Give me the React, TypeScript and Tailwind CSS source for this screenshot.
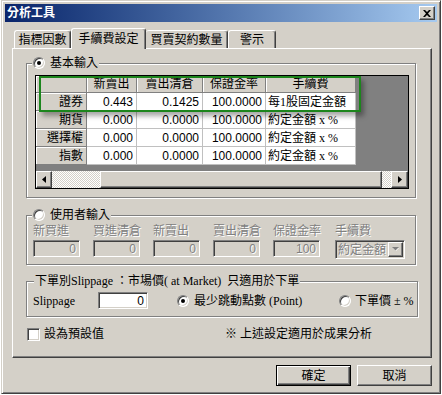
const rows = [
  ['證券', '0.443', '0.1425', '100.0000', '每1股固定金額'],
  ['期貨', '0.000', '0.0000', '100.0000', '約定金額 x %'],
  ['選擇權', '0.000', '0.0000', '100.0000', '約定金額 x %'],
  ['指數', '0.000', '0.0000', '100.0000', '約定金額 x %'],
];
const headers = ['', '新賣出', '賣出清倉', '保證金率', '手續費'];
const colW = ['w-[51px]', 'w-[50px]', 'w-[66px]', 'w-[63px]', 'w-[90px]'];

function Radio({ checked }: { checked?: boolean }) {
  return (
    <span className="flex items-center justify-center w-[12px] h-[12px] shrink-0 rounded-full bg-white border border-t-[#808080] border-l-[#808080] border-r-white border-b-white shadow-[inset_1px_1px_0_#404040,inset_-1px_-1px_0_#d4d0c8]">
      {checked && <span className="w-[4px] h-[4px] rounded-full bg-black" />}
    </span>
  );
}

function Arrow({ dir }: { dir: 'left' | 'right' }) {
  return (
    <svg width="4" height="7" viewBox="0 0 4 7">
      {dir === 'left' ? <path d="M4 0 L0 3.5 L4 7 Z" fill="#000" /> : <path d="M0 0 L4 3.5 L0 7 Z" fill="#000" />}
    </svg>
  );
}

function DisabledField({ label }: { label: string }) {
  return (
    <div className="flex flex-col w-[47px]">
      <span className="h-[14px] whitespace-nowrap text-[#808080] [text-shadow:1px_1px_0_#fff]">{label}</span>
      <div className="mt-[2px] h-[17px] flex items-center justify-end pr-[3px] border border-t-[#808080] border-l-[#808080] border-r-white border-b-white shadow-[inset_1px_1px_0_#404040,inset_-1px_-1px_0_#d4d0c8] font-['Liberation_Sans',sans-serif] text-[#808080] [text-shadow:1px_1px_0_#fff]">
        {label === '保證金率' ? '100' : '0'}
      </div>
    </div>
  );
}

export default function App() {
  return (
    <div className="w-[442px] h-[395px] bg-white overflow-hidden">
      <div className="ml-[1px] w-[440px] h-[394px] bg-[#d4d0c8] border border-t-[#d4d0c8] border-l-[#d4d0c8] border-r-[#404040] border-b-[#404040] shadow-[inset_1px_1px_0_#fff,inset_-1px_-1px_0_#808080] p-[3px] font-['Liberation_Serif','Noto_Sans_CJK_TC',serif] text-[12px] leading-[14px] text-black">
        {/* title bar */}
        <div className="h-[18px] flex items-center justify-between bg-linear-to-r from-[#0a246a] to-[#a6caf0] pl-[2px] pr-[2px]">
          <span className="text-white font-bold text-[12px]">分析工具</span>
          <div className="w-[16px] h-[14px] flex items-center justify-center bg-[#d4d0c8] border border-t-white border-l-white border-r-[#404040] border-b-[#404040] shadow-[inset_-1px_-1px_0_#808080]">
            <svg width="8" height="7" viewBox="0 0 8 7">
              <path d="M0 0 L2 0 L4 2 L6 0 L8 0 L5 3.5 L8 7 L6 7 L4 5 L2 7 L0 7 L3 3.5 Z" fill="#000" />
            </svg>
          </div>
        </div>

        {/* tabs */}
        <div className="mt-[6px] ml-[9px] flex items-end h-[20px]">
          <div className="w-[57px] h-[18px] flex items-center justify-center rounded-t-[3px] border-t border-l border-r border-t-white border-l-white border-r-[#404040] shadow-[inset_-1px_0_0_#808080]">指標因數</div>
          <div className="relative z-10 -mb-px w-[75px] h-[21px] flex items-start justify-center pt-[3px] bg-[#d4d0c8] rounded-t-[3px] border-t border-l border-r border-t-white border-l-white border-r-[#404040] shadow-[inset_-1px_0_0_#808080]">手續費設定</div>
          <div className="w-[82px] h-[18px] flex items-center justify-center rounded-t-[3px] border-t border-r border-t-white border-r-[#404040] shadow-[inset_-1px_0_0_#808080]">買賣契約數量</div>
          <div className="w-[48px] h-[18px] flex items-center justify-center rounded-t-[3px] border-t border-l border-r border-t-white border-l-white border-r-[#404040] shadow-[inset_-1px_0_0_#808080]">警示</div>
        </div>

        {/* tab panel */}
        <div className="ml-[7px] w-[420px] h-[310px] border border-t-white border-l-white border-r-[#404040] border-b-[#404040] shadow-[inset_-1px_-1px_0_#808080]">
          {/* 基本輸入 */}
          <fieldset className="mt-[7px] ml-[13px] w-[390px] p-0 border border-[#808080] shadow-[inset_1px_1px_0_#fff,1px_1px_0_#fff]">
            <legend className="ml-[5px] px-[1px] bg-[#d4d0c8]">
              <span className="flex items-center gap-[5px] h-[14px]">
                <Radio checked />
                <span>基本輸入</span>
              </span>
            </legend>
            <div className="pl-[8px] pt-[5px] pb-[8px]">
              <div className="relative flex flex-col w-[374px] h-[114px] border border-black bg-[#808080]">
                <div className="flex h-[17px]">
                  {headers.map((h, i) => (
                    <div key={i} className={`${colW[i]} flex items-center justify-center bg-[#d4d0c8] border-r border-b border-r-[#808080] border-b-[#808080] shadow-[inset_1px_1px_0_#fff]`}>{h}</div>
                  ))}
                </div>
                {rows.map((r, ri) => (
                  <div key={ri} className="flex h-[18px]">
                    {r.map((c, ci) =>
                      ci === 0 ? (
                        <div key={ci} className={`${colW[ci]} flex items-center justify-end pr-[3px] bg-[#d4d0c8] border-r border-b border-r-[#808080] border-b-[#808080] shadow-[inset_1px_1px_0_#fff]`}>{c}</div>
                      ) : ci === 4 ? (
                        <div key={ci} className={`${colW[ci]} flex items-center pl-[2px] bg-white border-r border-b border-[#c0c0c0] whitespace-pre`}>{c}</div>
                      ) : (
                        <div key={ci} className={`${colW[ci]} flex items-center justify-end pr-[3px] bg-white border-r border-b border-[#c0c0c0] font-['Liberation_Sans',sans-serif]`}>{c}</div>
                      )
                    )}
                  </div>
                ))}
                {/* horizontal scrollbar */}
                <div className="mt-auto flex h-[17px] bg-[#d4d0c8]">
                  <div className="w-[16px] flex items-center justify-center border border-t-white border-l-white border-r-[#404040] border-b-[#404040] shadow-[inset_-1px_-1px_0_#808080]">
                    <Arrow dir="left" />
                  </div>
                  <div className="w-[48px] bg-[image:repeating-conic-gradient(#d4d0c8_0_25%,#fff_0_50%)] bg-[length:2px_2px]" />
                  <div className="w-[282px] border border-t-white border-l-white border-r-[#404040] border-b-[#404040] shadow-[inset_-1px_-1px_0_#808080]" />
                  <div className="flex-1 bg-[image:repeating-conic-gradient(#d4d0c8_0_25%,#fff_0_50%)] bg-[length:2px_2px]" />
                  <div className="w-[17px] flex items-center justify-center border border-t-white border-l-white border-r-[#404040] border-b-[#404040] shadow-[inset_-1px_-1px_0_#808080]">
                    <Arrow dir="right" />
                  </div>
                </div>
                {/* highlight */}
                <div className="absolute left-[3px] top-0 w-[322px] h-[36px] border-2 border-[#1c851c] shadow-[3px_4px_5px_rgba(0,0,0,0.35)] pointer-events-none" />
              </div>
            </div>
          </fieldset>

          {/* 使用者輸入 */}
          <fieldset className="mt-[10px] ml-[13px] w-[390px] p-0 border border-[#808080] shadow-[inset_1px_1px_0_#fff,1px_1px_0_#fff]">
            <legend className="ml-[5px] px-[1px] bg-[#d4d0c8]">
              <span className="flex items-center gap-[5px] h-[14px]">
                <Radio />
                <span>使用者輸入</span>
              </span>
            </legend>
            <div className="flex items-start gap-[13px] pl-[6px] pt-[2px] pb-[5px]">
              <DisabledField label="新買進" />
              <DisabledField label="買進清倉" />
              <DisabledField label="新賣出" />
              <DisabledField label="賣出清倉" />
              <DisabledField label="保證金率" />
              <div className="ml-[2px] flex flex-col w-[70px]">
                <span className="h-[14px] text-[#808080] [text-shadow:1px_1px_0_#fff]">手續費</span>
                <div className="mt-[2px] h-[19px] flex items-center justify-between pl-[2px] pr-[1px] border border-t-[#808080] border-l-[#808080] border-r-white border-b-white shadow-[inset_1px_1px_0_#404040,inset_-1px_-1px_0_#d4d0c8]">
                  <span className="text-[#808080] [text-shadow:1px_1px_0_#fff]">約定金額</span>
                  <span className="w-[15px] h-[15px] flex items-center justify-center border border-t-white border-l-white border-r-[#404040] border-b-[#404040] shadow-[inset_-1px_-1px_0_#808080]">
                    <svg width="8" height="5" viewBox="0 0 8 5">
                      <path d="M1 1 L7 1 L4 4 Z" fill="#fff" />
                      <path d="M0 0 L7 0 L3.5 3.5 Z" fill="#808080" />
                    </svg>
                  </span>
                </div>
              </div>
            </div>
          </fieldset>

          {/* Slippage */}
          <fieldset className="mt-[9px] ml-[13px] w-[392px] p-0 border border-[#808080] shadow-[inset_1px_1px_0_#fff,1px_1px_0_#fff]">
            <legend className="ml-[7px] px-[1px] bg-[#d4d0c8] whitespace-pre">下單別Slippage ：市場價( at Market)  只適用於下單</legend>
            <div className="flex items-center pl-[6px] pt-[4px] pb-[7px]">
              <span className="w-[65px]">Slippage</span>
              <div className="w-[50px] h-[17px] flex items-center justify-end pr-[3px] bg-white border border-t-[#808080] border-l-[#808080] border-r-white border-b-white shadow-[inset_1px_1px_0_#404040,inset_-1px_-1px_0_#d4d0c8] font-['Liberation_Sans',sans-serif]">0</div>
              <div className="ml-[29px] w-[162px] flex items-center gap-[5px]">
                <Radio checked />
                <span className="whitespace-pre">最少跳動點數 (Point)</span>
              </div>
              <div className="flex items-center gap-[4px]">
                <Radio />
                <span className="whitespace-pre">下單價 ± %</span>
              </div>
            </div>
          </fieldset>

          {/* default checkbox */}
          <div className="mt-[10px] ml-[14px] flex items-center h-[14px]">
            <div className="w-[198px] flex items-center gap-[4px]">
              <span className="w-[13px] h-[13px] bg-white border border-t-[#808080] border-l-[#808080] border-r-white border-b-white shadow-[inset_1px_1px_0_#404040,inset_-1px_-1px_0_#d4d0c8]" />
              <span>設為預設值</span>
            </div>
            <span className="whitespace-pre">※ 上述設定適用於成果分析</span>
          </div>
        </div>

        {/* buttons */}
        <div className="mt-[7px] mr-[5px] flex justify-end gap-[6px]">
          <button className="w-[75px] h-[21px] flex items-center justify-center border border-black shadow-[inset_1px_1px_0_#fff,inset_-1px_-1px_0_#404040,inset_-2px_-2px_0_#808080]">確定</button>
          <button className="w-[75px] h-[21px] flex items-center justify-center border border-t-white border-l-white border-r-[#404040] border-b-[#404040] shadow-[inset_-1px_-1px_0_#808080]">取消</button>
        </div>
      </div>
    </div>
  );
}
